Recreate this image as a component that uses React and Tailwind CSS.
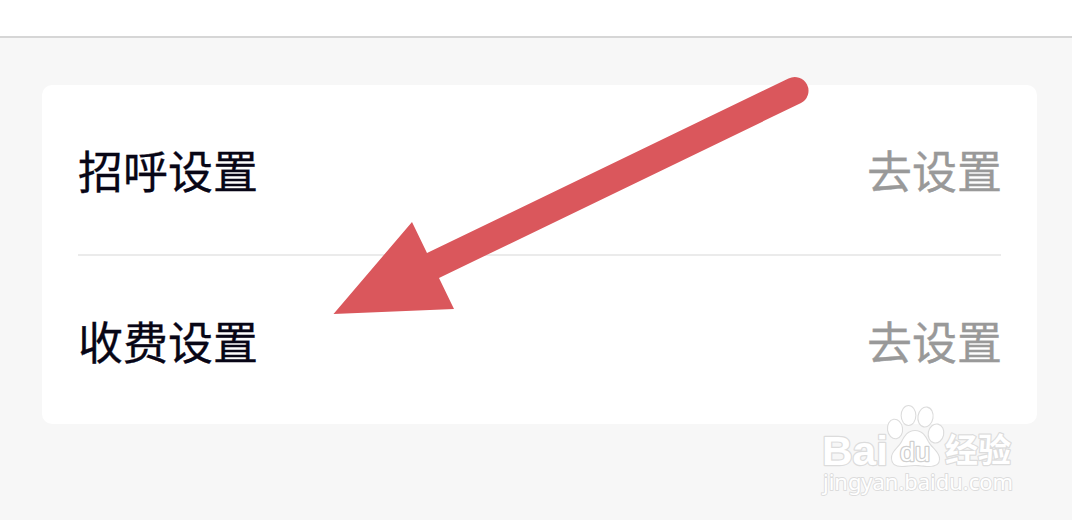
const rows = [
  { label: "招呼设置", action: "去设置" },
  { label: "收费设置", action: "去设置" },
]

function SettingRow({ label, action }) {
  return (
    <div className="flex h-[168px] items-center justify-between text-[45px] leading-none first:h-[171px]">
      <span className="text-[#080616] [-webkit-text-stroke:0.3px_#080616]">{label}</span>
      <button className="translate-x-px text-[#999999] [-webkit-text-stroke:0.3px_#999999]">{action}</button>
    </div>
  )
}

function Arrow() {
  return (
    <svg className="pointer-events-none absolute left-0 top-0" width="1072" height="520" viewBox="0 0 1072 520">
      <path
        d="M333.5 314L412 222L427 253L788.5 78.5A13.7 13.7 0 0 1 801 103L439 278L454 309Z"
        fill="#da575c"
      />
    </svg>
  )
}

function Watermark() {
  return (
    <svg
      className="pointer-events-none absolute left-[810px] top-[396px]"
      width="220"
      height="106"
      viewBox="810 396 220 106"
      fill="#ffffff"
      stroke="#dcdcdc"
      strokeWidth="2"
      strokeLinejoin="round"
      paintOrder="stroke"
    >
      <text x="822" y="465" fontSize="41" fontWeight="700" textLength="66" lengthAdjust="spacingAndGlyphs" strokeWidth="2.4" className="font-['Liberation_Sans',sans-serif]">
        Bai
      </text>
      {/* paw */}
      <g strokeWidth="2.2">
        <ellipse cx="895" cy="429" rx="7" ry="9.3" transform="rotate(-8 895 429)" />
        <ellipse cx="908.5" cy="415.5" rx="6.8" ry="9.5" />
        <ellipse cx="925.5" cy="417" rx="7" ry="9.5" transform="rotate(10 925.5 417)" />
        <ellipse cx="936" cy="433.5" rx="7.2" ry="9" transform="rotate(12 936 433.5)" />
        <path d="M915 431C922 431 925 436 928 442C932 449 939 452 939 459C939 464 935 466 929 466C923 466 920 465 915 465C910 465 907 466 902 466C895 466 892 463 892 458C892 451 899 448 902 442C905 436 908 431 915 431Z" />
      </g>
      <text x="900" y="460.5" fontSize="25" textLength="30" lengthAdjust="spacingAndGlyphs" stroke="#cfcfcf" strokeWidth="2.4" className="font-['Liberation_Sans',sans-serif]">
        du
      </text>
      <text x="945" y="462" fontSize="33" fontWeight="700" textLength="66" lengthAdjust="spacingAndGlyphs" strokeWidth="2.4" className="font-['Noto_Sans_CJK_SC',sans-serif]">
        经验
      </text>
      <text x="823" y="490" fontSize="22" textLength="190" strokeWidth="1.8" lengthAdjust="spacingAndGlyphs" className="font-['Noto_Sans',sans-serif]">
        jingyan.baidu.com
      </text>
    </svg>
  )
}

export default function App() {
  return (
    <div className="relative h-[520px] w-[1072px] overflow-hidden bg-[#f7f7f7] font-['Noto_Sans_CJK_SC',sans-serif]">
      <header className="h-[38px] border-b-2 border-[#d6d6d6] bg-white" />
      <main className="pl-[42px] pr-[35px] pt-[47px]">
        <div className="divide-y-2 divide-[#ebebeb] rounded-[10px] bg-white px-9">
          {rows.map((row) => (
            <SettingRow key={row.label} label={row.label} action={row.action} />
          ))}
        </div>
      </main>
      <Watermark />
      <Arrow />
    </div>
  )
}
